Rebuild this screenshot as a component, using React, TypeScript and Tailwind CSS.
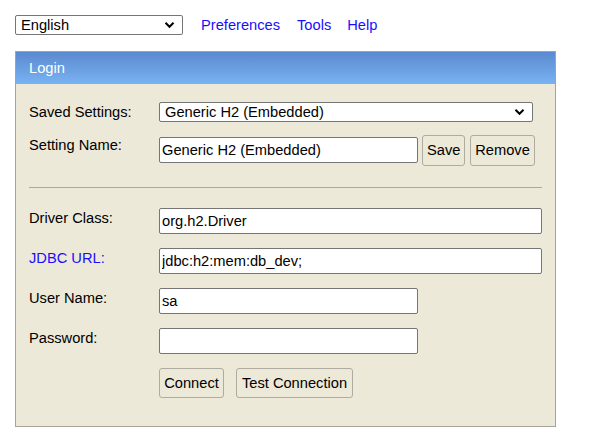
import React from "react";

const Chevron = () => (
  <svg width="11" height="8" viewBox="0 0 11 8" className="absolute top-1/2 -translate-y-1/2 right-[7px] pointer-events-none">
    <path d="M1.5 1.8 L5.5 5.8 L9.5 1.8" fill="none" stroke="#000" strokeWidth="2" />
  </svg>
);

const inputCls =
  "h-[26px] border border-[#767676] rounded-[2px] bg-white px-[2px] text-[14.67px] leading-[17px] text-black outline-none";
const btnCls =
  "border border-[#aeaba0] rounded-[3px] bg-[#ece9d8] text-[14.67px] text-black leading-none px-[4px]";

export default function App() {
  return (
    <div className="w-[591px] h-[446px] bg-white font-['Liberation_Sans',Arial,sans-serif] text-[14.67px] leading-[17px] text-black">
      <div className="pt-[15px] pl-[15px] flex items-center h-[35px]">
        <div className="relative w-[168px] h-[20px] border border-[#767676] rounded-[2px] bg-white flex items-center pl-[5px]">
          <span className="leading-none">English</span>
          <Chevron />
        </div>
        <a className="ml-[18px] text-[#1a0dff]">Preferences</a>
        <a className="ml-[17px] text-[#1a0dff]">Tools</a>
        <a className="ml-[16px] text-[#1a0dff]">Help</a>
      </div>
      <div className="mt-[16px] ml-[15px] w-[541px] border border-[#a5a39a] bg-[#ece9d8]">
        <div className="h-[32px] bg-gradient-to-b from-[#5a89cf] to-[#79b3f3] text-white flex items-center pl-[13px]">
          Login
        </div>
        <div className="px-[13px] pt-[18px] pb-[28px]">
          <div className="flex items-center">
            <div className="w-[130px]">Saved Settings:</div>
            <div className="relative w-[374px] h-[20px] border border-[#767676] rounded-[2px] bg-white flex items-center pl-[5px]">
              <span className="leading-none">Generic H2 (Embedded)</span>
              <Chevron />
            </div>
          </div>
          <div className="flex items-start mt-[13px]">
            <div className="w-[130px] mt-[2px]">Setting Name:</div>
            <input
              readOnly
              value="Generic H2 (Embedded)"
              className={inputCls + " w-[259px] mt-[2px]"}
            />
            <button className={btnCls + " ml-[4px] w-[43px] h-[31px]"}>Save</button>
            <button className={btnCls + " ml-[5px] w-[65px] h-[31px]"}>Remove</button>
          </div>
          <div className="mt-[21px] h-px bg-[#a9a79e]" />
          <div className="flex items-start mt-[20px]">
            <div className="w-[130px] mt-[2px]">Driver Class:</div>
            <input readOnly value="org.h2.Driver" className={inputCls + " w-[383px]"} />
          </div>
          <div className="flex items-start mt-[14px]">
            <div className="w-[130px] mt-[2px] text-[#1a0dff]">JDBC URL:</div>
            <input
              readOnly
              value="jdbc:h2:mem:db_dev;"
              className={inputCls + " w-[383px] border-[#4a4a4a]"}
            />
          </div>
          <div className="flex items-start mt-[14px]">
            <div className="w-[130px] mt-[2px]">User Name:</div>
            <input readOnly value="sa" className={inputCls + " w-[259px]"} />
          </div>
          <div className="flex items-start mt-[14px]">
            <div className="w-[130px] mt-[2px]">Password:</div>
            <input readOnly type="password" value="" className={inputCls + " w-[259px]"} />
          </div>
          <div className="flex items-start mt-[14px] pl-[130px]">
            <button className={btnCls + " w-[65px] h-[30px]"}>Connect</button>
            <button className={btnCls + " ml-[12px] w-[117px] h-[30px]"}>Test Connection</button>
          </div>
        </div>
      </div>
    </div>
  );
}
